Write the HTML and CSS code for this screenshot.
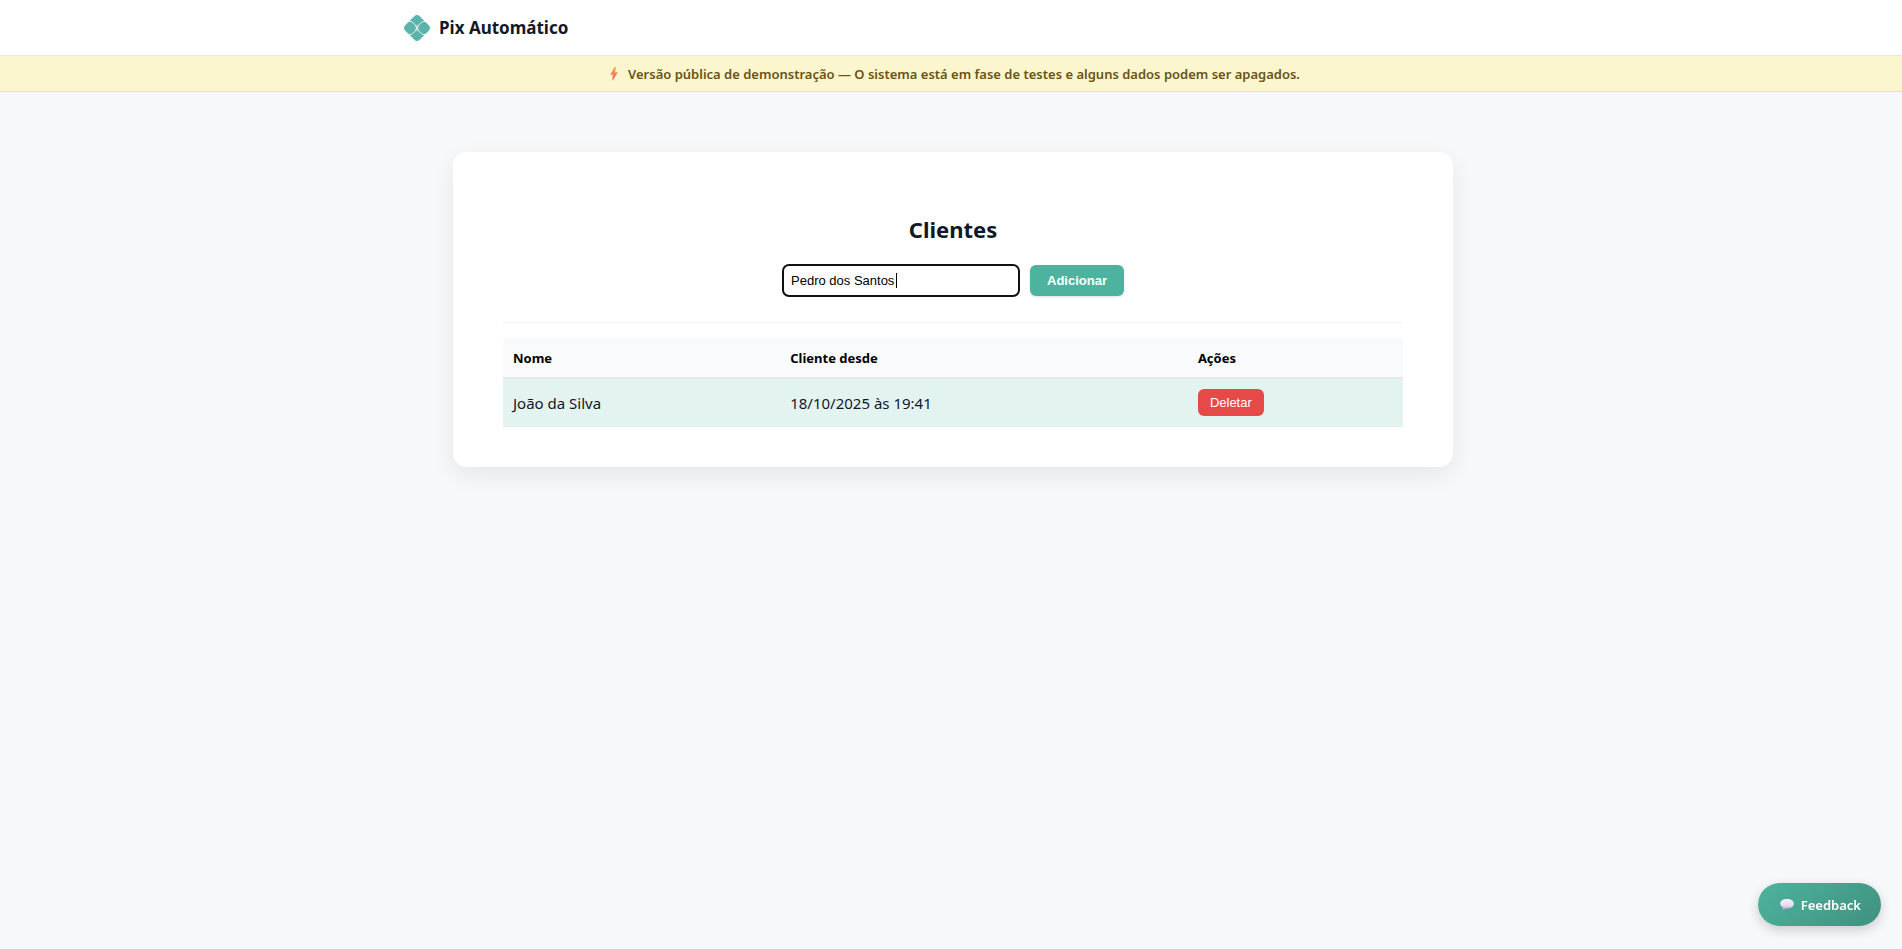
FILE: index.html
```html
<!DOCTYPE html>
<html lang="pt-BR">
<head>
<meta charset="utf-8">
<meta name="viewport" content="width=device-width, initial-scale=1">
<title>Pix Automático</title>
<link rel="stylesheet" href="styles.css">
</head>
<body>
<header class="topbar">
  <div class="topbar-inner">
    <svg class="logo" viewBox="0 0 26 26" aria-hidden="true">
      <path d="M10.300 1.200 Q13 -1.200 15.700 1.200 L24.800 10.300 Q27.200 13 24.800 15.700 L15.700 24.800 Q13 27.200 10.300 24.800 L1.200 15.700 Q-1.200 13 1.200 10.300Z"/>
      <path class="logo-seam" d="M4 6.500 H6.200 Q7.700 6.500 8.800 7.600 L11.900 10.700 Q13 11.700 14.100 10.700 L17.200 7.600 Q18.300 6.500 19.800 6.500 H22 M4 19.500 H6.200 Q7.700 19.500 8.800 18.400 L11.900 15.300 Q13 14.300 14.100 15.300 L17.200 18.400 Q18.300 19.500 19.800 19.500 H22 M11.200 11 L14.800 15 M14.800 11 L11.200 15"/>
    </svg>
    <span class="brand">Pix Automático</span>
  </div>
</header>
<div class="notice" role="status">
  <svg class="bolt" viewBox="0 0 8 14" aria-hidden="true">
    <defs><linearGradient id="bolt" x1="0" y1="0" x2="0" y2="1"><stop offset="0" stop-color="#f6a956"/><stop offset="1" stop-color="#ee5a5e"/></linearGradient></defs>
    <path fill="url(#bolt)" d="M4.600 0 L.2 7.800 H2.800 L2.300 14 L8 5.300 H5.200 L5.900 0Z"/>
  </svg>
  <span>Versão pública de demonstração — O sistema está em fase de testes e alguns dados podem ser apagados.</span>
</div>
<main class="content">
  <section class="card">
    <h1 class="title">Clientes</h1>
    <form class="add-form">
      <div class="field">
        <input class="name-input" type="text" aria-label="Nome do cliente" value="Pedro dos Santos">
        <span class="caret"></span>
      </div>
      <button class="add-button" type="button">Adicionar</button>
    </form>
    <table class="clients">
      <thead>
        <tr><th class="col-name">Nome</th><th class="col-since">Cliente desde</th><th>Ações</th></tr>
      </thead>
      <tbody>
        <tr><td>João da Silva</td><td>18/10/2025 às 19:41</td><td><button class="delete-button" type="button">Deletar</button></td></tr>
      </tbody>
    </table>
  </section>
</main>
<button class="feedback" type="button">
  <svg class="bubble" viewBox="0 0 14 11" aria-hidden="true">
    <defs><linearGradient id="bubble" x1="0" y1="0" x2="0" y2="1"><stop offset="0" stop-color="#f6f1f9"/><stop offset=".6" stop-color="#e6dbf0"/><stop offset="1" stop-color="#b79bd6"/></linearGradient></defs>
    <path fill="url(#bubble)" d="M7 0 C11 0 13.800 2 13.800 4.800 C13.800 7.700 11 9.500 7 9.500 L5.500 9.400 Q4.500 11 2.400 10.700 Q3.200 9.600 2.800 8.600 Q.2 7.200 .2 4.800 C.2 2 3 0 7 0Z"/>
  </svg>
  <span>Feedback</span>
</button>
</body>
</html>
```
FILE: styles.css
```css
* { box-sizing: border-box; }

body {
  margin: 0;
  min-height: 100vh;
  background: #f7f8fa;
  color: #111827;
  font-family: "Segoe UI", "Noto Sans", "Open Sans", sans-serif;
  font-size: 15px;
}

button, input { margin: 0; font-family: Arial, "Liberation Sans", sans-serif; }

.topbar { background: #fff; border-bottom: 1px solid #e5e7eb; }

.topbar-inner {
  display: flex;
  align-items: center;
  gap: 9px;
  max-width: 1100px;
  height: 55px;
  margin: 0 auto;
  padding: 0 3px;
}

.logo { width: 26px; height: 26px; fill: #5ab4ac; }
.logo-seam { fill: none; stroke: #e9f6f4; stroke-width: 1; }
.brand { font-size: 17px; font-weight: 700; }

.notice {
  display: flex;
  align-items: center;
  justify-content: center;
  gap: 10px;
  height: 36px;
  padding-left: 8px;
  background: #fcf6cf;
  border-bottom: 1px solid #efe3a4;
  color: #6b5314;
  font-size: 13px;
  font-weight: 600;
}

.bolt { width: 8px; height: 14px; }

.content { padding: 60px 0 60px 4px; }

.card {
  max-width: 1000px;
  margin: 0 auto;
  padding: 61px 50px 40px;
  background: #fff;
  border-radius: 14px;
  box-shadow: 0 8px 24px rgba(0, 0, 0, .07);
}

.title {
  margin: 0 0 18px;
  font-size: 22px;
  font-weight: 700;
  line-height: 33px;
  text-align: center;
}

.add-form {
  display: flex;
  align-items: center;
  justify-content: center;
  gap: 10px;
  padding-bottom: 25px;
  border-bottom: 1px solid #f1f2f4;
}

.field { position: relative; display: flex; }

.name-input {
  width: 238px;
  height: 33px;
  padding: 0 7px;
  border: 2px solid #101010;
  border-radius: 7px;
  outline: none;
  background: #fff;
  color: #000;
  font-size: 13px;
}

.caret {
  position: absolute;
  top: 9px;
  left: 114px;
  width: 1px;
  height: 15px;
  background: #000;
}

.add-button {
  height: 31px;
  padding: 0 17px;
  border: 0;
  border-radius: 6px;
  background: #4db39e;
  box-shadow: 0 1px 3px rgba(0, 0, 0, .12);
  color: #fff;
  font-size: 13px;
  font-weight: 700;
}

.clients {
  width: 100%;
  margin-top: 15px;
  border-collapse: separate;
  border-spacing: 0;
  table-layout: fixed;
}

.clients th {
  height: 41px;
  padding: 0 10px;
  background: #f9fafc;
  border-bottom: 2px solid #e5e7eb;
  color: #000;
  font-size: 13px;
  font-weight: 700;
  text-align: left;
}

.clients td {
  height: 48px;
  padding: 0 10px;
  background: #e3f4f0;
  border-bottom: 1px solid #e5e7eb;
}

.col-name { width: 30.8%; }
.col-since { width: 45.3%; }

.delete-button {
  display: block;
  height: 27px;
  padding: 0 12px;
  border: 0;
  border-radius: 6px;
  background: #e64a48;
  color: #fff;
  font-size: 13px;
}

.feedback {
  position: fixed;
  right: 21px;
  bottom: 23px;
  display: flex;
  align-items: center;
  gap: 7px;
  height: 43px;
  padding: 0 20px 0 22px;
  border: 0;
  border-radius: 22px;
  background: linear-gradient(135deg, #4db39e, #3f917f);
  box-shadow: 0 4px 12px rgba(0, 0, 0, .18);
  color: #fff;
  font-family: "Segoe UI", "Noto Sans", "Open Sans", sans-serif;
  font-size: 13px;
  font-weight: 600;
}

.bubble { width: 14px; height: 11px; }
```
